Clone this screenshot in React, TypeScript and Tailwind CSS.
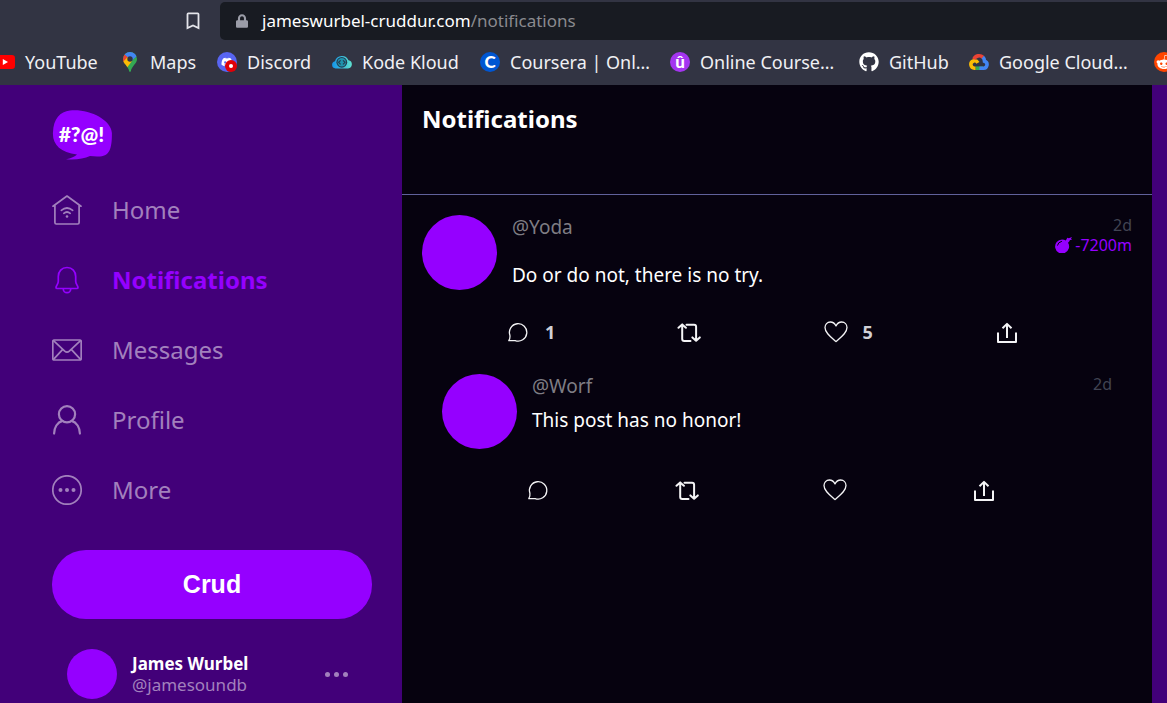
import type { ReactNode } from "react";
import { FaDiscord, FaGithub, FaLock, FaRedditAlien } from "react-icons/fa";

/* ---------- Browser bookmarks ---------- */

function YouTubeIcon() {
  return (
    <svg viewBox="0 0 20 20" className="size-5 shrink-0" aria-hidden="true">
      <rect x="0" y="3" width="20" height="14" rx="3.2" fill="#ff0000" />
      <path d="M7.800 7v6l5.200-3z" fill="#fff" />
    </svg>
  );
}

function MapsIcon() {
  return (
    <svg viewBox="0 0 20 20" className="size-5 shrink-0" aria-hidden="true">
      <clipPath id="pin">
        <path d="M10 0a7 7 0 0 1 7 7c0 5-5.200 6.500-6.200 12.300q-.8 1.200-1.600 0C8.200 13.500 3 12 3 7a7 7 0 0 1 7-7z" />
      </clipPath>
      <g clipPath="url(#pin)">
        <path d="M0 0h20v20H0z" fill="#34a853" />
        <path d="M4 0h14v3L9 11 5 4z" fill="#4285f4" />
        <path d="M0 2 4.600 2.400 10 7 3 14H0z" fill="#ea4335" />
        <path d="M2 11 7.600 5 12 9 6 17z" fill="#fbbc04" />
      </g>
      <circle cx="10" cy="7" r="2.700" fill="#323443" />
    </svg>
  );
}

function DiscordIcon() {
  return (
    <span className="relative flex size-5 shrink-0 items-center justify-center rounded-full bg-[#5865f2]">
      <FaDiscord className="size-3 text-white" />
      <span className="absolute right-0 bottom-0 flex size-3 items-center justify-center rounded-full bg-[#e00008]">
        <span className="size-1 rounded-full bg-white" />
      </span>
    </span>
  );
}

function KodeKloudIcon() {
  return (
    <svg viewBox="0 0 20 20" className="size-5 shrink-0" aria-hidden="true">
      <defs>
        <linearGradient id="kloud" x1="0" x2="1">
          <stop offset="0" stopColor="#1595e8" />
          <stop offset="1" stopColor="#5ee0cf" />
        </linearGradient>
      </defs>
      <path d="M3.500 16.500a3.700 3.700 0 0 1-.5-7.300A7.200 7.200 0 0 1 16.500 8.200a4.200 4.200 0 0 1-.5 8.300z" fill="url(#kloud)" />
      <circle cx="9.800" cy="10.300" r="5.400" fill="#253c50" />
      <circle cx="9.800" cy="10.300" r="4.200" fill="#1f93ad" />
      <path d="m8.600 8.300-2 2 2 2m2.400-4 2 2-2 2" fill="none" stroke="#253c50" strokeWidth="1.200" />
    </svg>
  );
}

function CourseraIcon() {
  return (
    <span className="flex size-5 shrink-0 items-center justify-center rounded-full bg-[#0056d2] font-['Lato'] text-[17px] leading-5 font-black text-white">
      C
    </span>
  );
}

function UdemyIcon() {
  return (
    <span className="flex size-5 shrink-0 items-center justify-center rounded-full bg-[#a435f0] font-['Lato'] text-[17px] leading-5 font-black text-white">
      û
    </span>
  );
}

function GoogleCloudIcon() {
  return (
    <svg viewBox="0 0 20 20" className="size-5 shrink-0" fill="none" strokeWidth="3.600" aria-hidden="true">
      <path d="M6.500 16.200H14" stroke="#34a853" />
      <path d="M6.500 16.200H5.600a3.700 3.700 0 1 1 3.300-5.400" stroke="#fbbc04" />
      <path d="M4.900 7.200A5.600 5.600 0 0 1 14 5.400" stroke="#ea4335" />
      <path d="M13.800 5.200q1.500 1.300 1.700 4a3.600 3.600 0 0 1-1.500 7H10.500" stroke="#4285f4" />
    </svg>
  );
}

function RedditIcon() {
  return (
    <span className="flex size-5 shrink-0 items-center justify-center rounded-full bg-[#ff4500]">
      <FaRedditAlien className="size-4 text-white" />
    </span>
  );
}

const bookmarks: { label: string; icon: ReactNode }[] = [
  { label: "YouTube", icon: <YouTubeIcon /> },
  { label: "Maps", icon: <MapsIcon /> },
  { label: "Discord", icon: <DiscordIcon /> },
  { label: "Kode Kloud", icon: <KodeKloudIcon /> },
  { label: "Coursera | Onl…", icon: <CourseraIcon /> },
  { label: "Online Course…", icon: <UdemyIcon /> },
  { label: "GitHub", icon: <FaGithub className="size-5 shrink-0 text-white" /> },
  { label: "Google Cloud…", icon: <GoogleCloudIcon /> },
  { label: "", icon: <RedditIcon /> },
];

function BrowserBar() {
  return (
    <header className="h-[85px] shrink-0 overflow-hidden bg-[#323443] pt-[2px]">
      <div className="flex h-[38px] items-center">
        <div className="flex w-[220px] shrink-0 justify-end pr-5">
          <button type="button" aria-label="Bookmark this page" className="text-[#e4e4ea]">
            <svg viewBox="0 0 14 18" className="h-[18px] w-[14px]" fill="none" stroke="currentColor" strokeWidth="1.800">
              <path d="M1.500 2.200q0-.8.800-.8h9.400q.8 0 .8.800V16L7 13.400 1.500 16z" />
            </svg>
          </button>
        </div>
        <div className="flex h-full flex-1 items-center gap-[14px] rounded-l-[5px] bg-[#181b22] pl-4 text-[#9b9da8]">
          <FaLock className="h-[14px] w-[12px] shrink-0" />
          <p className="text-[17px] leading-6 text-[#8a8a8f]">
            <span className="text-white">jameswurbel-cruddur.com</span>/notifications
          </p>
        </div>
      </div>
      <nav
        aria-label="Bookmarks"
        className="-ml-[5px] grid h-[43px] grid-cols-[125px_97px_115px_148px_190px_189px_110px_185px_20px] items-center"
      >
        {bookmarks.map((b, i) => (
          <a key={i} href="#" aria-label={b.label || "Reddit"} className="flex items-center gap-[10px] text-[18px] leading-6 whitespace-nowrap text-[#f0f0f4]">
            {b.icon}
            {b.label}
          </a>
        ))}
      </nav>
    </header>
  );
}

/* ---------- Sidebar ---------- */

function Logo() {
  return (
    <svg viewBox="0 0 60 50" className="h-[50px] w-[60px]" role="img" aria-label="Cruddur">
      <path
        d="M18 0.500C36-1.500 59 9 59.900 23C60 39 57.500 47 45 46.500L38 46C32 48.500 24 50.300 14 49.300C19 48.500 23 46.500 25 44.500C8 42.500 0 34 1 22C1.500 9 8 1.500 18 0.500Z"
        fill="#9500ff"
      />
      <text x="29.500" y="31.500" textAnchor="middle" fill="#fff" fontFamily="Lato, sans-serif" fontSize="21" fontWeight="900">
        #?@!
      </text>
    </svg>
  );
}

const navIcons: Record<string, ReactNode> = {
  Home: (
    <>
      <path d="M1 11.200 15 1l14 10.200M2.900 10v17.600q0 1.400 1.400 1.400h21.400q1.400 0 1.400-1.400V10" />
      <path d="M9.300 15.300q5.700-4.600 11.400 0M11.800 18.300q3.200-2.600 6.400 0" />
      <circle cx="15" cy="21.500" r="1.300" fill="currentColor" stroke="none" />
    </>
  ),
  Notifications: (
    <>
      <path d="M15 2.500c-5.300 0-8.700 3.800-8.700 9v4.800c0 2.700-2.300 4.500-2.300 6.200q0 1 1.200 1h19.600q1.200 0 1.200-1c0-1.700-2.300-3.500-2.300-6.200v-4.800c0-5.200-3.400-9-8.700-9z" />
      <path d="M11.300 24a3.700 3.700 0 0 0 7.400 0" />
    </>
  ),
  Messages: (
    <>
      <rect x="0.800" y="5" width="28.400" height="20" rx="1.300" />
      <path d="m1.500 5.600 11.200 10.500q2.300 2 4.600 0L28.500 5.600M1.500 24.400l9-9.800m18 9.800-9-9.800" />
    </>
  ),
  Profile: (
    <>
      <circle cx="15" cy="9.300" r="8.100" strokeWidth="2.200" />
      <path d="M2.100 28.600c0-6 3.200-11.300 8.400-12.700m17.400 12.700c0-6-3.200-11.300-8.400-12.700" strokeWidth="2.200" />
    </>
  ),
  More: (
    <>
      <circle cx="15" cy="15" r="14.200" />
      <g fill="currentColor" stroke="none">
        <circle cx="8.500" cy="15" r="2" />
        <circle cx="15" cy="15" r="2" />
        <circle cx="21.500" cy="15" r="2" />
      </g>
    </>
  ),
};

function NavItem({ label, active = false }: { label: string; active?: boolean }) {
  return (
    <a
      href="#"
      aria-current={active ? "page" : undefined}
      className={
        active
          ? "flex h-[70px] items-center gap-[30px] text-[24px] leading-8 font-bold text-[#9500ff]"
          : "flex h-[70px] items-center gap-[30px] text-[24px] leading-8 text-[#a280bd]"
      }
    >
      <svg viewBox="0 0 30 30" className="size-[30px]" fill="none" stroke="currentColor" strokeWidth="1.700" strokeLinecap="round" strokeLinejoin="round" aria-hidden="true">
        {navIcons[label]}
      </svg>
      {label}
    </a>
  );
}

function Sidebar() {
  return (
    <aside className="w-[402px] shrink-0 pt-[25px] pr-[30px] pl-[52px]">
      <Logo />
      <nav aria-label="Main" className="mt-[15px]">
        <NavItem label="Home" />
        <NavItem label="Notifications" active />
        <NavItem label="Messages" />
        <NavItem label="Profile" />
        <NavItem label="More" />
      </nav>
      <button
        type="button"
        className="mt-[25px] h-[69px] w-full rounded-[34px] bg-[#9500ff] pb-[2px] font-['Liberation_Sans',sans-serif] text-[25px] leading-8 font-bold text-white"
      >
        Crud
      </button>
      <div className="mt-[30px] flex items-center gap-[15px] pr-6 pl-[15px]">
        <span className="size-[50px] shrink-0 rounded-full bg-[#9500ff]" />
        <div className="flex-1 text-[17px] leading-[21px]">
          <p className="font-bold text-white">James Wurbel</p>
          <p className="text-[#a280bd]">@jamesoundb</p>
        </div>
        <button type="button" aria-label="Account options" className="flex gap-1 text-[#a280bd]">
          <span className="size-[5px] rounded-full bg-current" />
          <span className="size-[5px] rounded-full bg-current" />
          <span className="size-[5px] rounded-full bg-current" />
        </button>
      </div>
    </aside>
  );
}

/* ---------- Feed ---------- */

function Action({ label, count, children }: { label: string; count?: number; children: ReactNode }) {
  return (
    <button type="button" aria-label={label} className="flex h-6 items-center gap-[15px] text-[18px] leading-6 font-bold text-[#d0d0d6]">
      <svg viewBox="0 0 24 24" className="size-6 text-[#f4f4f6]" fill="none" stroke="currentColor" strokeLinejoin="round" aria-hidden="true">
        {children}
      </svg>
      {count}
    </button>
  );
}

function Actions({ replies, likes }: { replies?: number; likes?: number }) {
  return (
    <div className="flex justify-between pr-[113px] pl-[84px]">
      <Action label="Reply" count={replies}>
        <path d="M2.800 20.600h6.400a8.700 8.700 0 1 0-5.300-5.300q.4 3.200-1.100 5.300z" strokeWidth="1.300" />
      </Action>
      <Action label="Repost">
        <path d="M1.500 7.800 5.200 4.400l3.700 3.400M5.200 4.700V19q0 2 2 2h6.300M9.500 4.700h7.600q2 0 2 2v13.600M15.400 17.400l3.700 3.400 3.700-3.400" strokeWidth="2" strokeLinecap="round" />
      </Action>
      <Action label="Like" count={likes}>
        <path d="M12 21.600C7 17.300 1 13 1 7.600 1 4.400 3.300 2 6.300 2 8.800 2 11 3.700 12 5.900 13 3.700 15.200 2 17.700 2c3 0 5.300 2.400 5.300 5.600 0 5.400-6 9.700-11 14z" strokeWidth="1.300" />
      </Action>
      <Action label="Share">
        <path d="M3 12.500V22h18v-9.500" strokeWidth="2" />
        <path d="M12 18V4M7.500 8.300 12 3.900l4.500 4.400" strokeWidth="2" />
      </Action>
    </div>
  );
}

function BombIcon() {
  return (
    <svg viewBox="0 0 17 16" className="h-4 w-[17px]" aria-hidden="true">
      <path
        d="M7 2.500q2.200 0 3.800 1L12.300.8l1.500.4L17 0l-1 1.800 1 1-2 .2-.8 1.500-1.200 1.200A7 7 0 1 1 7 2.500z"
        fill="currentColor"
      />
      <path d="M2.500 8.200Q3 5.200 6.500 4.400" fill="none" stroke="#06020f" strokeWidth="1" strokeLinecap="round" />
    </svg>
  );
}

function Avatar() {
  return <span className="size-[75px] shrink-0 rounded-full bg-[#9500ff]" />;
}

export default function App() {
  return (
    <div className="flex h-screen flex-col overflow-hidden bg-[#420079] font-['Noto_Sans',sans-serif]">
      <BrowserBar />
      <div className="flex min-h-0 flex-1">
        <Sidebar />
        <main className="mr-[15px] flex-1 bg-[#06020f]">
          <div className="h-[110px] border-b border-[#60619b] px-5 pt-[18px]">
            <h1 className="text-[24px] leading-8 font-bold text-white">Notifications</h1>
          </div>

          <article className="px-5 pt-5">
            <div className="flex gap-[15px]">
              <Avatar />
              <div className="flex-1 text-[19px] leading-6">
                <p className="text-[#7f7d84]">@Yoda</p>
                <p className="mt-6 text-white">Do or do not, there is no try.</p>
              </div>
              <div className="text-right text-[16px] leading-5">
                <time className="block text-[#414453]">2d</time>
                <span className="flex items-center gap-[3px] text-[#9500ff]">
                  <BombIcon />
                  -7200m
                </span>
              </div>
            </div>
            <div className="mt-[30px]">
              <Actions replies={1} likes={5} />
            </div>
          </article>

          <article className="px-10 pt-[30px]">
            <div className="flex gap-[15px]">
              <Avatar />
              <div className="flex-1 text-[19px] leading-6">
                <p className="text-[#7f7d84]">@Worf</p>
                <p className="mt-[10px] text-white">This post has no honor!</p>
              </div>
              <time className="text-[16px] leading-5 text-[#414453]">2d</time>
            </div>
            <div className="mt-[29px] pr-[3px]">
              <Actions />
            </div>
          </article>
        </main>
      </div>
    </div>
  );
}
